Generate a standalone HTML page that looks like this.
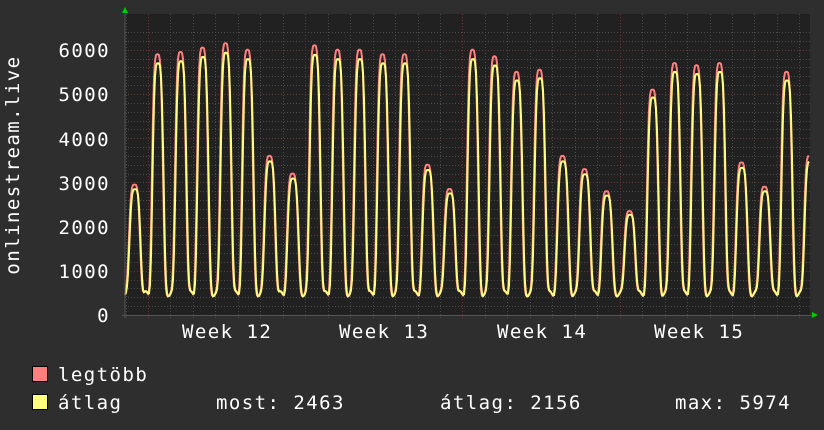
<!DOCTYPE html>
<html><head><meta charset="utf-8"><style>
html,body{margin:0;padding:0;background:#2e2e2e;}
body{width:824px;height:430px;overflow:hidden;position:relative;font-family:"DejaVu Sans Mono","Liberation Mono",monospace;color:#fff;}
svg{position:absolute;left:0;top:0;}
</style></head><body>
<svg id="g" width="824" height="430" xmlns="http://www.w3.org/2000/svg">
<rect x="125" y="14" width="685" height="301" fill="#212121"/>
<g id="grid"></g>
<g id="data"></g>
<line x1="125" y1="14" x2="125" y2="318" stroke="#555" stroke-width="1"/>
<line x1="122" y1="315.5" x2="812" y2="315.5" stroke="#555" stroke-width="1"/>
<polygon points="122,13 128,13 125,7" fill="#00cc00"/>
<polygon points="812,312 812,318 818,315" fill="#00cc00"/>
<g font-family="DejaVu Sans Mono, Liberation Mono, monospace" font-size="19" fill="#fff" letter-spacing="1.45">
<text x="110" y="57" text-anchor="end">6000</text>
<text x="110" y="101" text-anchor="end">5000</text>
<text x="110" y="146" text-anchor="end">4000</text>
<text x="110" y="190" text-anchor="end">3000</text>
<text x="110" y="234" text-anchor="end">2000</text>
<text x="110" y="278" text-anchor="end">1000</text>
<text x="110" y="322" text-anchor="end">0</text>
<text x="182" y="338">Week 12</text>
<text x="339" y="338">Week 13</text>
<text x="497" y="338">Week 14</text>
<text x="654" y="338">Week 15</text>
<text transform="translate(19,165) rotate(-90)" text-anchor="middle">onlinestream.live</text>
<rect x="32.5" y="366.5" width="15" height="15" fill="#ff7f7f" stroke="#000"/>
<rect x="32.5" y="394.5" width="15" height="15" fill="#ffff7f" stroke="#000"/>
<text x="58" y="381">legtöbb</text>
<text x="58" y="409">átlag</text>
<text x="216" y="409">most: 2463</text>
<text x="440" y="409">átlag: 2156</text>
<text x="675" y="409">max: 5974</text>
</g>
</svg>
<script>
(function(){
var NS="http://www.w3.org/2000/svg";
function el(t,a,p){var e=document.createElementNS(NS,t);for(var k in a)e.setAttribute(k,a[k]);p.appendChild(e);return e;}
var grid=document.getElementById("grid"),data=document.getElementById("data");
function Y(v){return 315-v*0.0442;}
for(var v=200;v<=6400;v+=200){var y=Math.round(Y(v))+0.5;if(y<14)break;
 var maj=v%1000==0;
 el("line",{x1:125,x2:810,y1:y,y2:y,stroke:maj?"#6b3535":"#4a4a4a","stroke-dasharray":"1,2"},grid);}
for(var k=-1;k<32;k++){var x=Math.round(148+22.46*k)+0.5;if(x<126||x>809)continue;
 var maj=(k%7==0);
 el("line",{x1:x,x2:x,y1:14,y2:318,stroke:maj?"#6b3535":"#4a4a4a","stroke-dasharray":"1,2"},grid);}
var P=[[135,2950],[158,5900],[181,5950],[203,6050],[226,6150],[248,6000],[270,3600],[293,3200],[315,6100],[338,6000],[360,6000],[383,5900],[405,5900],[428,3400],[450,2850],[473,6000],[495,5850],[517,5500],[540,5550],[563,3600],[585,3300],[607,2800],[630,2350],[653,5100],[675,5700],[697,5650],[720,5700],[742,3450],[765,2900],[787,5500],[810,3600]];
function val(x,f){var b=480+60*Math.sin(x*0.7);var s=0;
 for(var i=0;i<P.length;i++){var d=(x-P[i][0])/5;var h=(P[i][1]*f-b);
  var g=Math.exp(-d*d*d*d/2.2);s=Math.max(s,h*g);}
 return b+s;}
var a="",m="";
for(var x=125;x<=809;x++){a+=x+","+Y(val(x,0.965)).toFixed(1)+" ";m+=x+","+Y(val(x+0.5,1)).toFixed(1)+" ";}
el("polyline",{points:m,fill:"none",stroke:"#ff7f7f","stroke-width":2},data);
el("polyline",{points:a,fill:"none",stroke:"#ffff7f","stroke-width":2},data);
})();
</script>
</body></html>
